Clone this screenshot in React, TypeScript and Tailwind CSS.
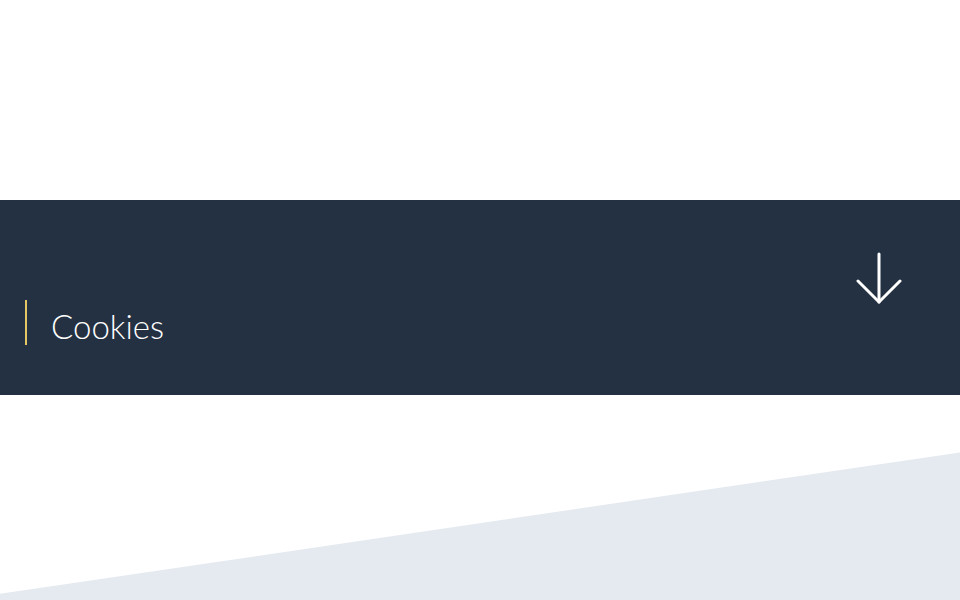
export default function App() {
  return (
    <div className="w-[960px] h-[600px] bg-white flex flex-col overflow-hidden" style={{ fontFamily: "Lato, 'Noto Sans', sans-serif" }}>
      <div className="h-[200px] shrink-0 bg-white" />
      <div className="h-[195px] shrink-0 bg-[#243142] flex items-start justify-between">
        <div className="mt-[100px] ml-[25px] flex items-start">
          <div className="w-[2px] h-[45px] bg-[#e6c766]" />
          <h2 className="ml-[24px] mt-[10px] text-[33px] font-light text-white leading-none">Cookies</h2>
        </div>
        <svg className="mt-[52px] mr-[58px]" width="46" height="52" viewBox="0 0 46 52" fill="none" stroke="#ffffff" strokeWidth="3" strokeLinecap="round" strokeLinejoin="round">
          <path d="M23 2 V50" />
          <path d="M2 29 L23 50 L44 29" />
        </svg>
      </div>
      <div className="flex-1 relative">
        <div className="absolute inset-0 bg-[#e5eaf1] [clip-path:polygon(0_97%,100%_28%,100%_100%,0_100%)]" />
      </div>
    </div>
  );
}
